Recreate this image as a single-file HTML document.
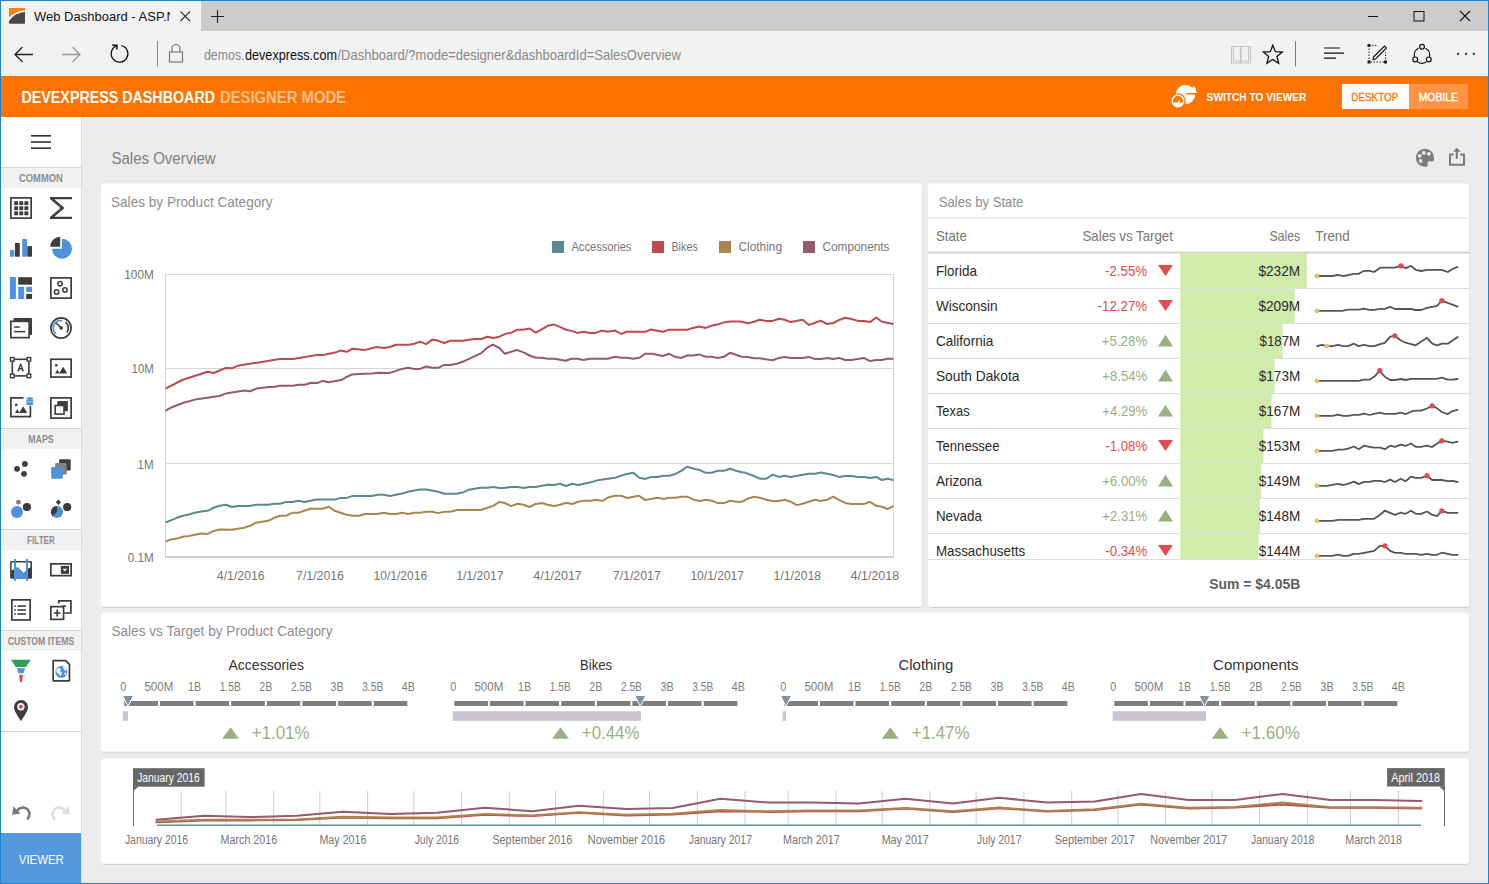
<!DOCTYPE html><html><head><meta charset="utf-8"><title>Web Dashboard</title>
<style>html,body{margin:0;padding:0;width:1489px;height:884px;overflow:hidden;background:#ececec}
svg{display:block;font-family:"Liberation Sans", sans-serif}</style></head><body>
<svg width="1489" height="884" viewBox="0 0 1489 884">
<defs>
<filter id="sh" x="-1%" y="-3%" width="102%" height="108%"><feDropShadow dx="0.3" dy="1" stdDeviation="0.7" flood-color="#000" flood-opacity="0.13"/></filter>
<clipPath id="tabclip"><rect x="30" y="1" width="140" height="30"/></clipPath>
<clipPath id="plotclip"><rect x="165.6" y="270" width="727.8" height="290"/></clipPath>
<clipPath id="gridclip"><rect x="928" y="253" width="541" height="306"/></clipPath>
</defs>
<rect x="0" y="0" width="1489" height="884" fill="#1883d7"/>
<rect x="1" y="1" width="1487" height="30" fill="#cccccc"/>
<rect x="1" y="1" width="200" height="30" fill="#f2f2f2"/>
<rect x="1" y="31" width="1487" height="45" fill="#f2f2f2"/>
<rect x="1" y="76" width="1487" height="41" fill="#ff7300"/>
<rect x="82" y="117" width="1406" height="766" fill="#ececec"/>
<rect x="1" y="117" width="80" height="766" fill="#ffffff"/>
<rect x="81" y="117" width="1" height="766" fill="#dcdcdc"/>
<path d="M9,17.6 C12.5,13.8 18,10.9 25,10.4 V12 C18,12.4 12,16.2 9,21.2 Z" fill="#ffffff"/>
<path d="M9,21.2 C12,16.2 18,12.4 25,12 V23 A0.8,0.8 0 0 1 24.2,23.8 H9.8 A0.8,0.8 0 0 1 9,23 Z" fill="#4a4a4a"/>
<path d="M9,7.9 H24.2 A0.8,0.8 0 0 1 25,8.7 V10.4 C18,10.9 12.5,13.8 9,17.6 Z" fill="#f67f1b"/>
<g clip-path="url(#tabclip)">
<text x="34.0" y="21.0" font-size="13" fill="#111111" textLength="132.5" lengthAdjust="spacingAndGlyphs">Web Dashboard - ASP.</text>
<text x="166.5" y="21.0" font-size="13" fill="#111111">NET</text>
</g>
<path d="M180.5,11.5 L190,21 M190,11.5 L180.5,21" fill="none" stroke="#333" stroke-width="1.1"/>
<path d="M217.5,10 V23 M211,16.5 H224" fill="none" stroke="#222" stroke-width="1.1"/>
<path d="M1368,16.5 H1378" fill="none" stroke="#111" stroke-width="1"/>
<rect x="1414" y="11.5" width="10" height="9.5" fill="none" stroke="#111" stroke-width="1"/>
<path d="M1460,11 L1470,21 M1470,11 L1460,21" fill="none" stroke="#111" stroke-width="1.1"/>
<path d="M33,54.5 H15 M22.5,47 L15,54.5 L22.5,62" fill="none" stroke="#222" stroke-width="1.3"/>
<path d="M62,54.5 H80 M72.5,47 L80,54.5 L72.5,62" fill="none" stroke="#999" stroke-width="1.3"/>
<path d="M121.4,45.6 A8.35,8.35 0 1 1 116.6,45.95" fill="none" stroke="#111" stroke-width="1.25"/>
<path d="M112.2,45.3 H116.9 V49.6" fill="none" stroke="#111" stroke-width="1.5" stroke-linejoin="miter"/>
<rect x="157" y="41" width="1" height="25.5" fill="#888888"/>
<rect x="169.5" y="52" width="13" height="10" fill="none" stroke="#777" stroke-width="1.2"/>
<path d="M172,52 V48.5 A4,4 0 0 1 180,48.5 V52" fill="none" stroke="#777" stroke-width="1.2"/>
<text x="204.0" y="59.6" font-size="14.5" fill="#8a8a8a" textLength="40.5" lengthAdjust="spacingAndGlyphs">demos.</text>
<text x="245.0" y="59.6" font-size="14.5" fill="#111111" textLength="92.0" lengthAdjust="spacingAndGlyphs">devexpress.com</text>
<text x="337.5" y="59.6" font-size="14.5" fill="#8a8a8a" textLength="343.5" lengthAdjust="spacingAndGlyphs">/Dashboard/?mode=designer&amp;dashboardId=SalesOverview</text>
<path d="M1231.5,46.5 H1240.5 V63 H1231.5 Z M1241,46.5 H1250.5 V63 H1241 Z" fill="none" stroke="#c4c4c4" stroke-width="1.1"/>
<path d="M1233.5,46.5 V61 H1240.5 M1248.5,46.5 V61 H1241" fill="none" stroke="#c4c4c4" stroke-width="1"/>
<path d="M1272.80,45.20 L1275.33,51.72 L1282.31,52.11 L1276.89,56.53 L1278.68,63.29 L1272.80,59.50 L1266.92,63.29 L1268.71,56.53 L1263.29,52.11 L1270.27,51.72 Z" fill="none" stroke="#111" stroke-width="1.3"/>
<rect x="1295" y="41.3" width="1" height="25.3" fill="#777777"/>
<path d="M1324,48 H1340 M1324,53.1 H1344 M1324,58.1 H1336" fill="none" stroke="#111" stroke-width="1.2"/>
<path d="M1369,45.5 V62 H1385.5 V52" fill="none" stroke="#222" stroke-width="1" stroke-dasharray="1.5,1.5"/>
<path d="M1369,45.5 H1377" fill="none" stroke="#222" stroke-width="1" stroke-dasharray="1.5,1.5"/>
<rect x="1367.5" y="44.0" width="3" height="3" fill="#222"/>
<rect x="1367.5" y="60.5" width="3" height="3" fill="#222"/>
<rect x="1384.0" y="60.5" width="3" height="3" fill="#222"/>
<path d="M1373.5,57 L1384.5,46 L1386.5,48 L1375.5,59 L1373,59.5 Z" fill="none" stroke="#111" stroke-width="1.1"/>
<path d="M1418.5,48.2 A7.5,7.5 0 0 0 1414.5,56.8 M1425.5,48.2 A7.5,7.5 0 0 1 1429.5,56.8 M1417.5,61.8 A7.5,7.5 0 0 0 1426.5,61.8" fill="none" stroke="#111" stroke-width="1.2"/>
<circle cx="1422" cy="46.7" r="2.4" fill="#f2f2f2" stroke="#111" stroke-width="1.2"/>
<circle cx="1415.2" cy="59.4" r="2.4" fill="#f2f2f2" stroke="#111" stroke-width="1.2"/>
<circle cx="1428.8" cy="59.4" r="2.4" fill="#f2f2f2" stroke="#111" stroke-width="1.2"/>
<circle cx="1458.1" cy="53.8" r="1.1" fill="#111"/>
<circle cx="1466.1" cy="53.8" r="1.1" fill="#111"/>
<circle cx="1473.8" cy="53.8" r="1.1" fill="#111"/>
<text x="21.5" y="103.0" font-size="15.6" fill="#ffffff" font-weight="bold" textLength="193.5" lengthAdjust="spacingAndGlyphs">DEVEXPRESS DASHBOARD</text>
<text x="220.0" y="103.0" font-size="15.6" fill="#ffc08c" font-weight="bold" textLength="126.0" lengthAdjust="spacingAndGlyphs">DESIGNER MODE</text>
<path d="M1185.5,94.5 L1195.1,94.5 A9.6,9.6 0 1 1 1192.29,87.71 Z" fill="#ffffff"/>
<path d="M1187.1,92.9 L1193.89,86.11 A9.6,9.6 0 0 1 1196.6999999999998,92.9 Z" fill="#ffffff"/>
<circle cx="1178" cy="101" r="7.8" fill="#ff7300"/>
<circle cx="1178" cy="101" r="6.5" fill="#ffffff"/>
<circle cx="1178" cy="101" r="5.1" fill="#ff7300"/>
<path d="M1173.1,102.6 L1182.9,102.6 A5.1,5.1 0 0 1 1173.1,102.6 Z" fill="#ffffff"/>
<path d="M1177.3,102.8 L1179.1,102.8 L1180.4,98.2 Z" fill="#ffffff"/>
<text x="1206.6" y="100.8" font-size="11.2" fill="#ffffff" font-weight="bold" textLength="99.8" lengthAdjust="spacingAndGlyphs">SWITCH TO VIEWER</text>
<rect x="1342" y="84" width="67" height="25" fill="#ffffff"/>
<text x="1351.3" y="100.6" font-size="10.8" fill="#ff7300" textLength="47.0" lengthAdjust="spacingAndGlyphs" stroke="#ff7300" stroke-width="0.35">DESKTOP</text>
<rect x="1409" y="84" width="59" height="25" fill="#ff9447"/>
<text x="1418.7" y="100.6" font-size="10.8" fill="#ffffff" textLength="39.2" lengthAdjust="spacingAndGlyphs" stroke="#ffffff" stroke-width="0.35">MOBILE</text>
<rect x="31" y="135.0" width="20" height="1.6" fill="#333333"/>
<rect x="31" y="141.2" width="20" height="1.6" fill="#333333"/>
<rect x="31" y="147.39999999999998" width="20" height="1.6" fill="#333333"/>
<rect x="1" y="167" width="80" height="1" fill="#d4d4d4"/>
<rect x="1" y="168" width="80" height="20" fill="#f2f2f2"/>
<text x="19.0" y="182.0" font-size="10" fill="#8c8c8c" font-weight="bold" textLength="43.8" lengthAdjust="spacingAndGlyphs">COMMON</text>
<rect x="1" y="428" width="80" height="1" fill="#d4d4d4"/>
<rect x="1" y="429" width="80" height="20" fill="#f2f2f2"/>
<text x="28.3" y="443.0" font-size="10" fill="#8c8c8c" font-weight="bold" textLength="25.4" lengthAdjust="spacingAndGlyphs">MAPS</text>
<rect x="1" y="529" width="80" height="1" fill="#d4d4d4"/>
<rect x="1" y="530" width="80" height="20" fill="#f2f2f2"/>
<text x="27.1" y="544.0" font-size="10" fill="#8c8c8c" font-weight="bold" textLength="27.8" lengthAdjust="spacingAndGlyphs">FILTER</text>
<rect x="1" y="630" width="80" height="1" fill="#d4d4d4"/>
<rect x="1" y="631" width="80" height="20" fill="#f2f2f2"/>
<text x="7.8" y="645.0" font-size="10" fill="#8c8c8c" font-weight="bold" textLength="66.4" lengthAdjust="spacingAndGlyphs">CUSTOM ITEMS</text>
<rect x="1" y="731" width="80" height="1" fill="#d4d4d4"/>
<g transform="translate(10,197)">
<rect x="0.85" y="0.85" width="20.3" height="20.3" fill="none" stroke="#3d3d3d" stroke-width="1.7"/>
<rect x="4.2" y="4.2" width="3.9" height="3.9" fill="#3d3d3d"/>
<rect x="4.2" y="9.3" width="3.9" height="3.9" fill="#3d3d3d"/>
<rect x="4.2" y="14.4" width="3.9" height="3.9" fill="#3d3d3d"/>
<rect x="9.3" y="4.2" width="3.9" height="3.9" fill="#3d3d3d"/>
<rect x="9.3" y="9.3" width="3.9" height="3.9" fill="#3d3d3d"/>
<rect x="9.3" y="14.4" width="3.9" height="3.9" fill="#3d3d3d"/>
<rect x="14.4" y="4.2" width="3.9" height="3.9" fill="#3d3d3d"/>
<rect x="14.4" y="9.3" width="3.9" height="3.9" fill="#3d3d3d"/>
<rect x="14.4" y="14.4" width="3.9" height="3.9" fill="#3d3d3d"/>
</g>
<g transform="translate(50,197)">
<path d="M0,0 H22 V2.2 H4.3 L14.6,11 L4.3,19.8 H22 V22 H0 V19.9 L10.6,11 L0,2.1 Z" fill="#3d3d3d"/>
</g>
<g transform="translate(10,239)">
<rect x="0" y="11" width="4.2" height="6.8" rx="0.8" fill="#4f92dc"/>
<rect x="4.9" y="4" width="4.9" height="13.8" rx="0.8" fill="#3d3d3d"/>
<rect x="12.2" y="0" width="4.8" height="17.8" rx="0.8" fill="#4f92dc"/>
<rect x="17.3" y="7" width="4.7" height="10.8" rx="0.8" fill="#3d3d3d"/>
</g>
<g transform="translate(50,237)">
<path d="M12,11.8 V1.8000000000000007 A10,10 0 1 1 2,11.8 Z" fill="#4f92dc"/>
<path d="M10.2,9.8 H0.2 A10,10 0 0 1 10.2,-0.2 Z" fill="#3d3d3d"/>
</g>
<g transform="translate(10,277)">
<rect x="0" y="0" width="5.9" height="22" fill="#4f92dc"/>
<rect x="8.2" y="0.2" width="13.8" height="7.5" fill="#3d3d3d"/>
<rect x="8.2" y="9.8" width="5.9" height="12.2" fill="#4f92dc"/>
<rect x="16.2" y="9.8" width="5.8" height="5.2" fill="#4f92dc"/>
<rect x="16.2" y="16.9" width="5.8" height="5.1" fill="#3d3d3d"/>
</g>
<g transform="translate(50,277)">
<rect x="0.85" y="0.85" width="20.3" height="20.3" fill="none" stroke="#3d3d3d" stroke-width="1.7"/>
<circle cx="10.1" cy="6.7" r="2.2" fill="none" stroke="#3d3d3d" stroke-width="1.5"/>
<circle cx="6.6" cy="15" r="2.2" fill="none" stroke="#3d3d3d" stroke-width="1.5"/>
<circle cx="15" cy="13" r="2.2" fill="none" stroke="#3d3d3d" stroke-width="1.5"/>
</g>
<g transform="translate(10,317)">
<rect x="3.4" y="1" width="18.6" height="17" rx="1" fill="#3d3d3d"/>
<rect x="0.85" y="4.35" width="18.3" height="16.3" fill="#fff" stroke="#3d3d3d" stroke-width="1.7"/>
<rect x="4.1" y="9.3" width="5.7" height="1.5" fill="#3d3d3d"/>
<rect x="4.1" y="13.9" width="11.1" height="1.5" fill="#3d3d3d"/>
</g>
<g transform="translate(50,317)">
<circle cx="11" cy="11" r="10.1" fill="none" stroke="#3d3d3d" stroke-width="1.7"/>
<path d="M6.2,16.8 A7.4,7.4 0 0 1 12.2,3.7" fill="none" stroke="#4f92dc" stroke-width="1.7"/>
<path d="M15.5,5.2 A7.4,7.4 0 0 1 16.8,15.6" fill="none" stroke="#3d3d3d" stroke-width="1.7"/>
<path d="M11.5,11.3 L5.8,5.7" fill="none" stroke="#3d3d3d" stroke-width="1.6"/>
<circle cx="11.2" cy="11" r="1.8" fill="#3d3d3d"/>
</g>
<g transform="translate(10,357)">
<rect x="2.3" y="2.3" width="16.6" height="16.6" fill="none" stroke="#3d3d3d" stroke-width="1.6"/>
<rect x="0.4999999999999998" y="0.4999999999999998" width="3.6" height="3.6" fill="#fff" stroke="#3d3d3d" stroke-width="1.4"/>
<rect x="17.099999999999998" y="0.4999999999999998" width="3.6" height="3.6" fill="#fff" stroke="#3d3d3d" stroke-width="1.4"/>
<rect x="0.4999999999999998" y="17.099999999999998" width="3.6" height="3.6" fill="#fff" stroke="#3d3d3d" stroke-width="1.4"/>
<rect x="17.099999999999998" y="17.099999999999998" width="3.6" height="3.6" fill="#fff" stroke="#3d3d3d" stroke-width="1.4"/>
<path d="M7.3,14.2 L10.1,6.6 H11.2 L14,14.2 H12.3 L11.7,12.4 H9.6 L9,14.2 Z M10,11.1 H11.3 L10.65,9.1 Z" fill="#3d3d3d"/>
</g>
<g transform="translate(50,358.4)">
<rect x="0.85" y="0.85" width="20.3" height="17.8" fill="none" stroke="#3d3d3d" stroke-width="1.7"/>
<circle cx="6.2" cy="6.8" r="1.3" fill="#3d3d3d"/>
<path d="M5,15 L7.4,11 L9.5,15 Z M9,15 L13.2,8.3 L17.2,15 Z" fill="#3d3d3d"/>
</g>
<g transform="translate(10,397)">
<path d="M13.5,0.85 H0.85 V19.7 H20.4 V9" fill="none" stroke="#3d3d3d" stroke-width="1.7"/>
<circle cx="6.2" cy="7.9" r="1.3" fill="#3d3d3d"/>
<path d="M5,16 L7.4,12 L9.5,16 Z M9,16 L13.2,9.3 L17.2,16 Z" fill="#3d3d3d"/>
<ellipse cx="19.8" cy="1.6" rx="3.4" ry="1.4" fill="#4f92dc"/>
<rect x="16.4" y="2.8" width="6.8" height="1.8" fill="#4f92dc"/>
<rect x="16.4" y="5.2" width="6.8" height="1.8" fill="#4f92dc"/>
<ellipse cx="19.8" cy="7" rx="3.4" ry="1.3" fill="#4f92dc"/>
</g>
<g transform="translate(50,397)">
<rect x="0.85" y="0.85" width="20.3" height="20.3" fill="none" stroke="#3d3d3d" stroke-width="1.7"/>
<rect x="7.3" y="4.1" width="10.6" height="10.2" rx="0.8" fill="#3d3d3d"/>
<rect x="5.2" y="8.5" width="8.8" height="8.6" fill="#fff" stroke="#3d3d3d" stroke-width="1.6"/>
</g>
<circle cx="17" cy="468.8" r="2.9" fill="#3d3d3d"/>
<circle cx="24.9" cy="463.9" r="2.9" fill="#3d3d3d"/>
<circle cx="24" cy="473.8" r="2.9" fill="#3d3d3d"/>
<rect x="59.1" y="459.2" width="11.6" height="11.4" rx="1.2" fill="#3d3d3d"/>
<rect x="55.1" y="462.9" width="11.6" height="11.6" rx="1.2" fill="#808080"/>
<rect x="51.2" y="467.1" width="11.6" height="11.6" rx="1.2" fill="#4f92dc"/>
<circle cx="18.4" cy="502.2" r="2.4" fill="#808080"/>
<circle cx="26.9" cy="507" r="4.1" fill="#3d3d3d"/>
<circle cx="17" cy="512" r="6" fill="#4f92dc"/>
<path d="M58.4,499.6 L61,502.3 L58.4,505 L55.8,502.3 Z" fill="#3d3d3d"/>
<circle cx="67.2" cy="507" r="4.1" fill="#3d3d3d"/>
<circle cx="57" cy="512" r="6" fill="#4f92dc"/>
<path d="M57,512 L57,506 A6,6 0 0 0 52.7,516.2 Z" fill="#3d3d3d"/>
<g transform="translate(10,559)">
<rect x="0.1" y="2.1" width="21.9" height="17.7" rx="1.3" fill="#3d3d3d"/>
<path d="M1.6,3.6 H20.4 V8.4 L18.06,9.6 L16,11.95 L13.5,14 L7.54,8.05 L5.84,9.2 L4.1,10.3 L1.6,11.6 Z" fill="#ffffff"/>
<path d="M4,10.3 L5.84,9.2 L7.54,8.05 L13.5,14 L16,11.95 L18,9.65 V19.8 H4 Z" fill="#4f92dc"/>
<rect x="4" y="-0.1" width="2" height="21.9" fill="#4f92dc"/>
<rect x="16" y="-0.1" width="2" height="21.9" fill="#4f92dc"/>
</g>
<g transform="translate(50,563)">
<rect x="0.85" y="0.85" width="20.3" height="11.8" fill="none" stroke="#3d3d3d" stroke-width="1.7"/>
<rect x="10.8" y="2.9" width="8.2" height="8" fill="#3d3d3d"/>
<path d="M12.6,5.7 H17.2 L14.9,8.4 Z" fill="#fff"/>
</g>
<g transform="translate(10,599)">
<rect x="1.85" y="0.85" width="18.3" height="20.1" fill="none" stroke="#3d3d3d" stroke-width="1.7"/>
<rect x="4.2" y="6.3" width="1.6" height="1.6" fill="#3d3d3d"/>
<rect x="7.4" y="6.3" width="8.5" height="1.6" fill="#3d3d3d"/>
<rect x="4.2" y="10.2" width="1.6" height="1.6" fill="#3d3d3d"/>
<rect x="7.4" y="10.2" width="8.5" height="1.6" fill="#3d3d3d"/>
<rect x="4.2" y="14.2" width="1.6" height="1.6" fill="#3d3d3d"/>
<rect x="7.4" y="14.2" width="8.5" height="1.6" fill="#3d3d3d"/>
</g>
<g transform="translate(50,599)">
<path d="M8.7,4.5 V1.95 H20.9 V14 H14" fill="none" stroke="#3d3d3d" stroke-width="1.7"/>
<rect x="12.5" y="6.2" width="3.5" height="1.5" fill="#3d3d3d"/>
<rect x="0.85" y="7.65" width="12.7" height="12.7" fill="#fff" stroke="#3d3d3d" stroke-width="1.7"/>
<path d="M7.2,10.6 V17.4 M3.8,14 H10.6" fill="none" stroke="#3d3d3d" stroke-width="1.7"/>
</g>
<path d="M11,659.8 H30.8 L25.9,666.9 H15.8 Z" fill="#2f9e5a"/>
<path d="M16.7,668.3 H25.2 L23.5,673.3 H18.4 Z" fill="#4f92dc"/>
<path d="M19.1,674.7 H22.9 L22.1,682 H19.9 Z" fill="#e0464e"/>
<g transform="translate(52.3,659.8)">
<path d="M0.85,0.85 H13.5 L17.15,4.5 V21 H0.85 Z" fill="none" stroke="#3d3d3d" stroke-width="1.7" stroke-linejoin="round"/>
<circle cx="9" cy="12.3" r="6" fill="#4f92dc"/>
<path d="M6,8 L8.5,9.2 L7.8,11.5 L9.8,13 L8.2,16.5 L7,14.5 L4.6,12.6 L3.8,10.2 Z M10.2,7 L12.6,7.6 L14.2,10 L12.8,11.2 Z M11.8,13.2 L14,12.6 L13,16 Z" fill="#fff"/>
</g>
<path d="M21,700 A7,7 0 0 1 28,707 C28,711.5 24,716 21,721.3 C18,716 14,711.5 14,707 A7,7 0 0 1 21,700 Z" fill="#3d3d3d"/>
<circle cx="20.9" cy="706.8" r="3.7" fill="#ffffff"/>
<circle cx="20.9" cy="706.8" r="2" fill="#e0464e"/>
<path d="M16.8,810.8 C19.5,807.3 24.8,806.2 27.8,809.6 C30.3,812.6 29.6,816.6 27.3,819.4" fill="none" stroke="#7a7a7a" stroke-width="2.6"/>
<path d="M13.3,806.25 L12.1,814.8 L20.6,813.45 Z" fill="#7a7a7a"/>
<g transform="translate(82,0) scale(-1,1)">
<path d="M16.8,810.8 C19.5,807.3 24.8,806.2 27.8,809.6 C30.3,812.6 29.6,816.6 27.3,819.4" fill="none" stroke="#dedede" stroke-width="2.6"/>
<path d="M13.3,806.25 L12.1,814.8 L20.6,813.45 Z" fill="#dedede"/>
</g>
<rect x="1" y="833" width="80" height="50" fill="#5599dd"/>
<text x="18.8" y="863.8" font-size="12.5" fill="#ffffff" textLength="45.0" lengthAdjust="spacingAndGlyphs">VIEWER</text>
<text x="111.5" y="164.0" font-size="16" fill="#808080" textLength="104.2" lengthAdjust="spacingAndGlyphs">Sales Overview</text>
<g transform="translate(1416,148.7)">
<path d="M9,0 A9,9 0 0 0 0,9.5 A8.6,8.6 0 0 0 8.6,18 C10.6,18 12.2,17.5 11.7,16 C11.2,14.6 11.6,12.6 13.6,12.6 C15.2,12.6 16.6,13 17.5,12 C18,11.2 18,10.2 18,9 A9,9 0 0 0 9,0 Z" fill="#7b7b7b"/>
<circle cx="3.7" cy="7.1" r="1.9" fill="#ececec"/>
<circle cx="7.8" cy="4.2" r="1.9" fill="#ececec"/>
<circle cx="12.9" cy="5.1" r="1.9" fill="#ececec"/>
<circle cx="4.7" cy="12.2" r="1.9" fill="#ececec"/>
</g>
<g transform="translate(1449,147.8)">
<path d="M0,5.6 H4.7 V7.6 H2 V16 H14 V7.6 H11.2 V5.6 H16 V18 H0 Z" fill="#7b7b7b"/>
<rect x="6.8" y="3.3" width="2" height="7.8" fill="#7b7b7b"/>
<path d="M4.1,3.9 L7.8,0 L11.9,3.9 Z" fill="#7b7b7b"/>
</g>
<rect x="101" y="183.6" width="821" height="423.4" rx="3" fill="#ffffff" filter="url(#sh)"/>
<rect x="928" y="183.6" width="541" height="423.4" rx="3" fill="#ffffff" filter="url(#sh)"/>
<rect x="101" y="612.6" width="1368" height="139" rx="3" fill="#ffffff" filter="url(#sh)"/>
<rect x="101" y="758.4" width="1368" height="105.4" rx="3" fill="#ffffff" filter="url(#sh)"/>
<text x="111.0" y="206.9" font-size="14.8" fill="#8e8e8e" textLength="161.6" lengthAdjust="spacingAndGlyphs">Sales by Product Category</text>
<rect x="552" y="241" width="12" height="12" fill="#5a8991"/>
<text x="571.4" y="251.0" font-size="13" fill="#767676" textLength="60.0" lengthAdjust="spacingAndGlyphs">Accessories</text>
<rect x="652" y="241" width="12" height="12" fill="#bd4a51"/>
<text x="671.4" y="251.0" font-size="13" fill="#767676" textLength="26.5" lengthAdjust="spacingAndGlyphs">Bikes</text>
<rect x="719" y="241" width="12" height="12" fill="#ab8550"/>
<text x="738.4" y="251.0" font-size="13" fill="#767676" textLength="43.7" lengthAdjust="spacingAndGlyphs">Clothing</text>
<rect x="803" y="241" width="12" height="12" fill="#955a6c"/>
<text x="822.5" y="251.0" font-size="13" fill="#767676" textLength="67.0" lengthAdjust="spacingAndGlyphs">Components</text>
<rect x="165" y="274" width="728.5" height="1" fill="#d6d6d6"/>
<rect x="165" y="368" width="728.5" height="1" fill="#d6d6d6"/>
<rect x="165" y="463" width="728.5" height="1" fill="#d6d6d6"/>
<rect x="165" y="274" width="1" height="283" fill="#d6d6d6"/>
<rect x="893" y="274" width="1" height="283" fill="#d6d6d6"/>
<rect x="165" y="556" width="729" height="2" fill="#cdcdcd"/>
<text x="124.3" y="279.3" font-size="13" fill="#767676" textLength="29.5" lengthAdjust="spacingAndGlyphs">100M</text>
<text x="131.6" y="373.4" font-size="13" fill="#767676" textLength="22.2" lengthAdjust="spacingAndGlyphs">10M</text>
<text x="137.6" y="468.5" font-size="13" fill="#767676" textLength="16.1" lengthAdjust="spacingAndGlyphs">1M</text>
<text x="127.7" y="562.0" font-size="13" fill="#767676" textLength="26.0" lengthAdjust="spacingAndGlyphs">0.1M</text>
<text x="216.8" y="580.4" font-size="13" fill="#767676" textLength="47.9" lengthAdjust="spacingAndGlyphs">4/1/2016</text>
<text x="296.1" y="580.4" font-size="13" fill="#767676" textLength="47.8" lengthAdjust="spacingAndGlyphs">7/1/2016</text>
<text x="373.5" y="580.4" font-size="13" fill="#767676" textLength="53.7" lengthAdjust="spacingAndGlyphs">10/1/2016</text>
<text x="456.2" y="580.4" font-size="13" fill="#767676" textLength="47.4" lengthAdjust="spacingAndGlyphs">1/1/2017</text>
<text x="533.3" y="580.4" font-size="13" fill="#767676" textLength="48.5" lengthAdjust="spacingAndGlyphs">4/1/2017</text>
<text x="612.8" y="580.4" font-size="13" fill="#767676" textLength="48.0" lengthAdjust="spacingAndGlyphs">7/1/2017</text>
<text x="690.4" y="580.4" font-size="13" fill="#767676" textLength="53.6" lengthAdjust="spacingAndGlyphs">10/1/2017</text>
<text x="773.6" y="580.4" font-size="13" fill="#767676" textLength="47.4" lengthAdjust="spacingAndGlyphs">1/1/2018</text>
<text x="850.6" y="580.4" font-size="13" fill="#767676" textLength="48.6" lengthAdjust="spacingAndGlyphs">4/1/2018</text>
<g clip-path="url(#plotclip)">
<polyline points="165.5,388.6 182.2,380.0 207.5,371.8 213.8,373.0 225.7,368.0 232.0,368.3 237.6,365.8 279.6,359.0 293.0,359.1 316.8,355.0 323.0,355.0 335.0,352.6 340.5,350.6 346.9,351.8 352.4,348.7 355.0,349.0 364.4,350.1 376.5,347.0 383.9,348.0 389.9,347.0 396.0,344.7 408.7,344.7 414.1,343.7 420.1,341.6 426.2,344.1 432.2,339.6 437.6,340.6 444.3,343.0 450.4,340.7 462.5,340.7 474.5,339.0 481.3,339.0 487.3,336.7 493.3,338.0 499.4,336.7 505.4,333.8 510.8,332.9 516.9,329.8 522.9,329.8 529.6,328.5 535.7,332.6 541.7,329.3 547.7,325.8 554.0,324.6 559.4,326.6 565.4,329.5 571.5,330.9 577.5,332.9 583.6,331.8 589.6,332.9 595.7,332.9 601.7,330.6 607.8,331.8 615.1,330.6 621.2,334.0 626.6,331.8 645.4,331.8 650.7,329.5 662.8,331.8 668.9,329.8 687.0,329.8 693.0,327.9 699.1,326.6 705.8,327.9 711.2,325.8 717.2,324.6 723.3,322.6 730.0,321.5 740.7,321.5 747.8,323.2 754.0,321.8 759.7,319.8 766.5,320.9 772.7,320.9 778.9,318.7 784.6,319.8 790.8,322.1 802.7,319.8 808.9,324.9 820.8,320.7 827.0,324.0 833.2,323.0 838.9,320.1 845.1,317.8 851.3,319.0 858.1,320.9 863.8,320.9 870.0,322.1 876.2,317.5 881.9,321.8 893.5,324.0" fill="none" stroke="#bd4a51" stroke-width="2" stroke-linejoin="round" stroke-linecap="round"/>
<polyline points="165.4,410.8 170.7,407.7 182.8,403.0 194.9,399.6 219.1,396.0 225.8,393.6 235.2,392.0 244.6,390.6 250.0,391.2 256.7,388.5 268.8,386.9 274.2,386.9 279.5,385.8 293.0,385.8 298.3,384.8 305.0,384.8 311.1,382.8 317.2,383.1 322.5,380.8 328.6,382.2 341.3,380.1 346.7,376.8 352.1,374.5 359.0,373.9 371.8,373.6 378.5,372.8 389.9,372.9 402.0,368.9 408.1,367.8 414.1,368.9 420.1,368.9 426.2,366.5 432.2,367.8 438.3,367.8 444.3,364.9 450.4,364.9 457.1,363.8 462.5,361.8 481.3,353.1 487.3,347.7 492.7,344.7 499.4,348.0 504.8,353.7 516.9,350.0 522.9,352.1 529.6,355.5 535.7,357.8 541.7,357.8 547.7,358.7 554.7,358.7 565.4,360.8 571.5,358.7 577.5,358.7 583.6,360.0 589.6,358.7 607.8,358.7 615.1,356.7 621.2,357.8 627.2,357.8 633.3,358.8 639.3,357.8 645.4,353.7 652.1,353.7 662.8,356.0 668.9,353.7 674.9,356.8 681.0,358.0 687.0,355.5 693.0,355.5 699.1,354.4 705.8,356.8 711.9,356.8 717.9,358.0 723.9,356.8 730.0,352.8 736.0,354.8 741.4,356.8 747.8,356.9 754.0,358.3 759.7,358.3 772.7,360.2 778.9,357.9 784.6,356.9 790.8,358.0 802.7,358.0 808.9,356.9 815.1,359.1 820.8,359.1 827.0,357.9 833.2,359.1 838.9,357.9 845.1,360.0 851.3,360.0 863.8,357.9 870.0,361.1 876.2,360.0 881.9,360.0 887.5,358.8 893.5,358.8" fill="none" stroke="#955a6c" stroke-width="2" stroke-linejoin="round" stroke-linecap="round"/>
<polyline points="165.4,522.5 170.7,520.4 176.8,517.8 182.8,515.7 188.9,514.4 194.9,512.7 201.0,511.4 207.7,510.8 213.7,507.7 219.8,505.7 225.8,504.7 231.9,507.0 237.9,505.9 250.0,505.9 256.0,504.7 268.1,504.7 274.2,503.7 280.2,503.7 286.3,501.9 292.3,501.9 298.3,500.7 304.4,502.0 310.4,500.7 316.5,499.6 334.6,499.6 340.7,497.9 346.7,497.9 352.7,495.9 360.0,495.9 371.8,495.9 377.8,494.7 383.9,494.7 389.9,496.0 402.0,493.6 408.1,491.8 420.1,489.6 426.2,489.6 438.3,491.8 444.3,493.8 456.4,493.8 462.5,492.6 468.5,489.8 480.6,487.8 487.3,487.8 493.3,486.9 499.4,487.9 504.1,487.9 511.5,486.9 517.5,486.9 523.6,487.9 529.6,486.9 535.7,486.9 547.7,484.8 554.0,484.9 560.1,483.8 566.1,486.0 572.2,483.8 578.2,484.9 589.6,482.6 596.3,480.6 602.4,479.6 615.1,477.8 626.6,473.9 633.3,472.8 639.3,477.8 645.4,478.9 651.4,476.9 657.5,476.9 663.5,475.8 669.5,475.8 675.6,473.9 681.6,470.6 687.0,466.8 693.7,468.8 699.8,470.1 705.8,472.8 711.9,472.8 717.9,470.8 723.9,470.8 730.0,468.8 736.0,470.8 742.1,472.2 745.0,472.6 754.0,476.0 760.3,478.8 765.9,478.8 772.7,474.7 778.9,476.9 784.6,475.8 790.8,476.9 802.7,474.7 808.9,473.8 815.1,473.8 820.8,472.6 833.2,474.9 838.9,476.9 845.1,476.0 851.3,476.0 858.1,476.9 863.8,476.9 870.0,478.1 876.2,476.9 881.9,480.0 887.5,478.8 893.5,480.0" fill="none" stroke="#5a8991" stroke-width="2" stroke-linejoin="round" stroke-linecap="round"/>
<polyline points="165.4,541.7 170.7,539.5 176.8,538.6 182.8,536.8 188.9,535.9 201.0,533.6 207.7,533.9 213.7,530.9 219.8,529.6 231.9,529.8 243.9,527.8 250.0,525.8 256.0,522.7 268.1,520.8 274.2,517.8 280.2,515.7 286.3,515.7 292.3,512.8 298.3,512.8 310.4,508.8 322.5,508.8 328.6,506.7 334.6,510.8 346.7,514.8 352.7,515.7 359.0,515.7 365.1,514.0 377.2,514.0 383.9,512.8 389.9,514.0 396.0,514.0 402.0,512.8 408.1,514.0 414.1,512.8 420.1,512.8 426.2,511.7 432.2,511.7 438.3,513.1 444.3,511.7 450.4,511.7 457.1,510.0 480.6,510.0 493.3,505.9 499.4,501.9 504.8,503.0 510.8,506.1 517.5,503.7 523.6,504.7 529.6,507.0 535.7,503.9 541.7,503.0 547.7,504.7 554.0,506.1 560.1,504.8 566.1,502.8 572.2,504.0 578.2,501.7 584.3,500.8 590.3,500.8 596.3,499.7 602.4,501.0 608.4,497.3 615.1,495.7 621.2,495.7 627.2,498.0 638.7,495.7 645.4,500.1 657.5,497.7 663.5,499.0 669.5,497.7 675.6,497.7 681.6,496.7 687.0,496.7 693.7,499.7 699.8,501.0 705.8,499.7 711.9,500.8 717.9,503.1 723.9,503.1 730.0,500.8 736.0,501.7 742.1,501.7 747.8,498.6 754.0,496.7 759.7,497.7 766.5,499.8 772.7,500.9 778.9,500.9 784.6,499.8 790.8,501.8 797.0,505.1 802.7,503.7 808.9,501.8 815.1,499.8 820.8,500.9 827.0,499.8 833.2,496.7 838.9,499.8 845.1,502.9 851.3,504.1 863.8,504.1 870.0,501.8 876.2,505.8 881.9,506.8 887.5,509.1 893.5,506.0" fill="none" stroke="#ab8550" stroke-width="2" stroke-linejoin="round" stroke-linecap="round"/>
</g>
<text x="938.7" y="206.9" font-size="14.8" fill="#8e8e8e" textLength="84.7" lengthAdjust="spacingAndGlyphs">Sales by State</text>
<rect x="928" y="217.5" width="541" height="1" fill="#dddddd"/>
<text x="935.9" y="241.0" font-size="14.5" fill="#767676" textLength="30.9" lengthAdjust="spacingAndGlyphs">State</text>
<text x="1082.5" y="241.0" font-size="14.5" fill="#767676" textLength="90.4" lengthAdjust="spacingAndGlyphs">Sales vs Target</text>
<text x="1269.6" y="241.0" font-size="14.5" fill="#767676" textLength="30.4" lengthAdjust="spacingAndGlyphs">Sales</text>
<text x="1315.3" y="241.0" font-size="14.5" fill="#767676" textLength="34.4" lengthAdjust="spacingAndGlyphs">Trend</text>
<rect x="928" y="251.5" width="541" height="2" fill="#d3d3d3"/>
<g clip-path="url(#gridclip)">
<rect x="1180.2" y="253" width="126.59999999999991" height="35" fill="#d0ecab"/>
<text x="935.9" y="275.7" font-size="14.5" fill="#2a2a2a" textLength="41.1" lengthAdjust="spacingAndGlyphs">Florida</text>
<text x="1104.9" y="275.7" font-size="14.5" fill="#e34c53" textLength="42.3" lengthAdjust="spacingAndGlyphs">-2.55%</text>
<path d="M1158,265 L1173,265 L1165.5,276 Z" fill="#e34c53"/>
<text x="1258.4" y="275.7" font-size="14.5" fill="#2a2a2a" textLength="41.8" lengthAdjust="spacingAndGlyphs">$232M</text>
<polyline points="1316.9,276.0 1332.6,276.0 1337.9,274.8 1343.3,276.1 1353.9,273.8 1358.7,273.8 1364.0,270.8 1369.4,270.8 1374.1,272.0 1380.1,267.7 1394.9,267.7 1400.9,265.9 1405.6,268.1 1411.0,265.9 1415.7,269.8 1421.1,271.0 1427.0,269.8 1441.8,269.8 1447.8,272.0 1452.5,269.0 1457.6,266.9" fill="none" stroke="#555555" stroke-width="1.8" stroke-linejoin="round" stroke-linecap="round"/>
<circle cx="1316.9" cy="276.0" r="2.4" fill="#e8c066"/>
<circle cx="1400.9" cy="265.9" r="2.6" fill="#e5474f"/>
<rect x="1180.2" y="288" width="114.59999999999991" height="35" fill="#d0ecab"/>
<rect x="928" y="288" width="541" height="1" fill="#dcdcdc"/>
<text x="935.9" y="310.7" font-size="14.5" fill="#2a2a2a" textLength="61.7" lengthAdjust="spacingAndGlyphs">Wisconsin</text>
<text x="1097.6" y="310.7" font-size="14.5" fill="#e34c53" textLength="49.6" lengthAdjust="spacingAndGlyphs">-12.27%</text>
<path d="M1158,300 L1173,300 L1165.5,311 Z" fill="#e34c53"/>
<text x="1258.4" y="310.7" font-size="14.5" fill="#2a2a2a" textLength="41.8" lengthAdjust="spacingAndGlyphs">$209M</text>
<polyline points="1316.9,310.8 1342.1,310.8 1348.0,309.6 1358.7,309.6 1364.0,308.7 1369.4,309.9 1374.1,309.9 1380.1,308.8 1384.8,308.8 1390.2,306.9 1394.9,309.0 1411.0,309.0 1415.7,310.0 1421.1,310.0 1427.0,307.9 1437.1,305.8 1441.8,300.7 1457.6,306.7" fill="none" stroke="#555555" stroke-width="1.8" stroke-linejoin="round" stroke-linecap="round"/>
<circle cx="1316.9" cy="310.8" r="2.4" fill="#e8c066"/>
<circle cx="1441.8" cy="300.7" r="2.6" fill="#e5474f"/>
<rect x="1180.2" y="323" width="102.5" height="35" fill="#d0ecab"/>
<rect x="928" y="323" width="541" height="1" fill="#dcdcdc"/>
<text x="935.9" y="345.7" font-size="14.5" fill="#2a2a2a" textLength="57.4" lengthAdjust="spacingAndGlyphs">California</text>
<text x="1101.8" y="345.7" font-size="14.5" fill="#97b182" textLength="45.4" lengthAdjust="spacingAndGlyphs">+5.28%</text>
<path d="M1158,346.5 L1165.5,334.7 L1173,346.5 Z" fill="#97b182"/>
<text x="1259.5" y="345.7" font-size="14.5" fill="#2a2a2a" textLength="40.7" lengthAdjust="spacingAndGlyphs">$187M</text>
<polyline points="1317.1,346.1 1321.9,344.9 1326.9,346.1 1332.6,346.1 1337.9,344.9 1343.3,346.1 1348.0,346.1 1353.9,343.7 1358.7,346.1 1364.0,344.9 1369.4,346.1 1374.1,346.1 1380.1,344.1 1384.8,342.9 1390.2,336.7 1394.9,335.8 1400.9,340.5 1405.6,342.7 1415.7,345.3 1427.0,337.8 1432.3,343.7 1437.1,345.3 1441.8,343.7 1447.8,343.7 1452.5,340.5 1457.6,337.0" fill="none" stroke="#555555" stroke-width="1.8" stroke-linejoin="round" stroke-linecap="round"/>
<circle cx="1326.9" cy="346.1" r="2.4" fill="#e8c066"/>
<circle cx="1394.9" cy="335.8" r="2.6" fill="#e5474f"/>
<rect x="1180.2" y="358" width="94.39999999999986" height="35" fill="#d0ecab"/>
<rect x="928" y="358" width="541" height="1" fill="#dcdcdc"/>
<text x="935.9" y="380.7" font-size="14.5" fill="#2a2a2a" textLength="83.5" lengthAdjust="spacingAndGlyphs">South Dakota</text>
<text x="1102.3" y="380.7" font-size="14.5" fill="#97b182" textLength="44.9" lengthAdjust="spacingAndGlyphs">+8.54%</text>
<path d="M1158,381.5 L1165.5,369.7 L1173,381.5 Z" fill="#97b182"/>
<text x="1258.8" y="380.7" font-size="14.5" fill="#2a2a2a" textLength="41.4" lengthAdjust="spacingAndGlyphs">$173M</text>
<polyline points="1316.9,380.8 1358.7,380.8 1364.0,379.7 1369.4,379.7 1374.1,376.8 1379.8,370.7 1384.8,376.8 1390.2,380.0 1394.9,380.0 1400.9,379.0 1405.6,380.0 1411.0,378.8 1436.5,378.8 1441.8,377.6 1447.8,379.7 1452.5,379.7 1457.6,379.0" fill="none" stroke="#555555" stroke-width="1.8" stroke-linejoin="round" stroke-linecap="round"/>
<circle cx="1316.9" cy="380.8" r="2.4" fill="#e8c066"/>
<circle cx="1379.8" cy="370.7" r="2.6" fill="#e5474f"/>
<rect x="1180.2" y="393" width="91.29999999999995" height="35" fill="#d0ecab"/>
<rect x="928" y="393" width="541" height="1" fill="#dcdcdc"/>
<text x="935.9" y="415.7" font-size="14.5" fill="#2a2a2a" textLength="33.8" lengthAdjust="spacingAndGlyphs">Texas</text>
<text x="1102.3" y="415.7" font-size="14.5" fill="#97b182" textLength="44.9" lengthAdjust="spacingAndGlyphs">+4.29%</text>
<path d="M1158,416.5 L1165.5,404.7 L1173,416.5 Z" fill="#97b182"/>
<text x="1258.8" y="415.7" font-size="14.5" fill="#2a2a2a" textLength="41.4" lengthAdjust="spacingAndGlyphs">$167M</text>
<polyline points="1316.9,415.8 1332.6,415.8 1337.9,414.7 1343.3,415.8 1348.0,415.8 1353.9,414.8 1358.7,414.8 1364.0,413.6 1369.4,415.0 1374.1,413.8 1380.1,412.6 1384.8,413.8 1394.9,413.8 1400.9,412.6 1405.6,414.1 1411.0,411.7 1415.7,410.6 1421.1,410.6 1427.0,408.5 1432.1,405.9 1436.5,407.9 1441.8,412.0 1447.8,414.1 1452.5,411.1 1457.6,409.9" fill="none" stroke="#555555" stroke-width="1.8" stroke-linejoin="round" stroke-linecap="round"/>
<circle cx="1316.9" cy="415.8" r="2.4" fill="#e8c066"/>
<circle cx="1432.1" cy="405.9" r="2.6" fill="#e5474f"/>
<rect x="1180.2" y="428" width="83.29999999999995" height="35" fill="#d0ecab"/>
<rect x="928" y="428" width="541" height="1" fill="#dcdcdc"/>
<text x="935.9" y="450.7" font-size="14.5" fill="#2a2a2a" textLength="63.6" lengthAdjust="spacingAndGlyphs">Tennessee</text>
<text x="1105.3" y="450.7" font-size="14.5" fill="#e34c53" textLength="41.9" lengthAdjust="spacingAndGlyphs">-1.08%</text>
<path d="M1158,440 L1173,440 L1165.5,451 Z" fill="#e34c53"/>
<text x="1258.8" y="450.7" font-size="14.5" fill="#2a2a2a" textLength="41.4" lengthAdjust="spacingAndGlyphs">$153M</text>
<polyline points="1316.9,450.9 1332.6,450.9 1337.9,449.7 1343.3,449.7 1348.0,448.6 1353.9,446.5 1358.7,449.2 1364.0,445.7 1369.4,446.8 1374.1,447.7 1380.1,447.7 1384.8,449.2 1390.2,445.7 1394.9,446.8 1400.9,444.7 1405.6,445.9 1411.0,443.5 1415.7,446.8 1421.1,446.8 1427.0,445.7 1432.1,447.1 1437.1,443.5 1441.8,440.8 1447.8,441.7 1452.5,442.9 1457.6,441.7" fill="none" stroke="#555555" stroke-width="1.8" stroke-linejoin="round" stroke-linecap="round"/>
<circle cx="1316.9" cy="450.9" r="2.4" fill="#e8c066"/>
<circle cx="1441.8" cy="440.8" r="2.6" fill="#e5474f"/>
<rect x="1180.2" y="463" width="81.0" height="35" fill="#d0ecab"/>
<rect x="928" y="463" width="541" height="1" fill="#dcdcdc"/>
<text x="935.9" y="485.7" font-size="14.5" fill="#2a2a2a" textLength="46.0" lengthAdjust="spacingAndGlyphs">Arizona</text>
<text x="1102.3" y="485.7" font-size="14.5" fill="#97b182" textLength="44.9" lengthAdjust="spacingAndGlyphs">+6.00%</text>
<path d="M1158,486.5 L1165.5,474.7 L1173,486.5 Z" fill="#97b182"/>
<text x="1258.8" y="485.7" font-size="14.5" fill="#2a2a2a" textLength="41.4" lengthAdjust="spacingAndGlyphs">$149M</text>
<polyline points="1316.9,485.8 1326.6,485.8 1337.9,483.8 1343.3,485.0 1348.0,483.8 1353.9,481.6 1358.7,484.1 1364.0,481.8 1369.4,481.8 1374.1,480.8 1380.1,480.8 1384.8,482.0 1390.2,479.6 1394.9,482.0 1400.9,478.7 1405.6,481.2 1411.0,476.7 1415.7,477.8 1421.1,477.8 1427.0,475.7 1432.1,480.0 1441.8,480.0 1447.8,481.1 1452.5,480.8 1457.6,482.0" fill="none" stroke="#555555" stroke-width="1.8" stroke-linejoin="round" stroke-linecap="round"/>
<circle cx="1316.9" cy="485.8" r="2.4" fill="#e8c066"/>
<circle cx="1427.0" cy="475.7" r="2.6" fill="#e5474f"/>
<rect x="1180.2" y="498" width="79.79999999999995" height="35" fill="#d0ecab"/>
<rect x="928" y="498" width="541" height="1" fill="#dcdcdc"/>
<text x="935.9" y="520.7" font-size="14.5" fill="#2a2a2a" textLength="46.0" lengthAdjust="spacingAndGlyphs">Nevada</text>
<text x="1102.3" y="520.7" font-size="14.5" fill="#97b182" textLength="44.9" lengthAdjust="spacingAndGlyphs">+2.31%</text>
<path d="M1158,521.5 L1165.5,509.7 L1173,521.5 Z" fill="#97b182"/>
<text x="1258.8" y="520.7" font-size="14.5" fill="#2a2a2a" textLength="41.4" lengthAdjust="spacingAndGlyphs">$148M</text>
<polyline points="1316.9,520.8 1332.6,520.8 1337.9,519.8 1358.7,519.8 1364.0,518.8 1374.1,518.8 1380.1,514.7 1384.8,510.7 1390.2,512.9 1394.9,514.9 1400.9,512.6 1405.6,513.8 1411.0,510.7 1415.7,513.8 1421.1,513.8 1427.0,511.5 1432.1,514.7 1437.1,516.1 1441.8,510.9 1447.8,512.9 1457.6,512.9" fill="none" stroke="#555555" stroke-width="1.8" stroke-linejoin="round" stroke-linecap="round"/>
<circle cx="1316.9" cy="520.8" r="2.4" fill="#e8c066"/>
<circle cx="1441.8" cy="510.9" r="2.6" fill="#e5474f"/>
<rect x="1180.2" y="533" width="78.39999999999986" height="35" fill="#d0ecab"/>
<rect x="928" y="533" width="541" height="1" fill="#dcdcdc"/>
<text x="935.9" y="555.7" font-size="14.5" fill="#2a2a2a" textLength="89.2" lengthAdjust="spacingAndGlyphs">Massachusetts</text>
<text x="1105.3" y="555.7" font-size="14.5" fill="#e34c53" textLength="41.9" lengthAdjust="spacingAndGlyphs">-0.34%</text>
<path d="M1158,545 L1173,545 L1165.5,556 Z" fill="#e34c53"/>
<text x="1258.8" y="555.7" font-size="14.5" fill="#2a2a2a" textLength="41.4" lengthAdjust="spacingAndGlyphs">$144M</text>
<polyline points="1316.9,555.9 1332.6,555.9 1337.9,554.7 1343.3,555.9 1348.0,555.9 1353.9,553.9 1358.7,553.9 1364.0,552.9 1374.1,550.9 1380.1,545.8 1384.8,545.8 1390.2,550.9 1394.9,552.9 1400.9,552.9 1405.6,553.9 1415.7,553.9 1421.1,554.8 1427.0,553.9 1432.1,554.8 1437.1,554.8 1441.8,552.7 1447.8,553.9 1452.5,554.8 1457.6,554.8" fill="none" stroke="#555555" stroke-width="1.8" stroke-linejoin="round" stroke-linecap="round"/>
<circle cx="1316.9" cy="555.9" r="2.4" fill="#e8c066"/>
<circle cx="1384.8" cy="545.8" r="2.6" fill="#e5474f"/>
</g>
<rect x="928" y="559" width="541" height="1" fill="#dcdcdc"/>
<text x="1209.3" y="588.5" font-size="14" fill="#606060" font-weight="bold" textLength="90.9" lengthAdjust="spacingAndGlyphs">Sum = $4.05B</text>
<text x="111.4" y="636.0" font-size="15" fill="#8e8e8e" textLength="221.1" lengthAdjust="spacingAndGlyphs">Sales vs Target by Product Category</text>
<text x="228.5" y="670.0" font-size="15" fill="#333333" textLength="75.5" lengthAdjust="spacingAndGlyphs">Accessories</text>
<text x="120.3" y="691.4" font-size="12.5" fill="#7d7d7d" textLength="6.0" lengthAdjust="spacingAndGlyphs">0</text>
<text x="144.4" y="691.4" font-size="12.5" fill="#7d7d7d" textLength="29.0" lengthAdjust="spacingAndGlyphs">500M</text>
<text x="188.1" y="691.4" font-size="12.5" fill="#7d7d7d" textLength="13.0" lengthAdjust="spacingAndGlyphs">1B</text>
<text x="219.7" y="691.4" font-size="12.5" fill="#7d7d7d" textLength="21.0" lengthAdjust="spacingAndGlyphs">1.5B</text>
<text x="259.3" y="691.4" font-size="12.5" fill="#7d7d7d" textLength="13.0" lengthAdjust="spacingAndGlyphs">2B</text>
<text x="290.9" y="691.4" font-size="12.5" fill="#7d7d7d" textLength="21.0" lengthAdjust="spacingAndGlyphs">2.5B</text>
<text x="330.6" y="691.4" font-size="12.5" fill="#7d7d7d" textLength="13.0" lengthAdjust="spacingAndGlyphs">3B</text>
<text x="362.2" y="691.4" font-size="12.5" fill="#7d7d7d" textLength="21.0" lengthAdjust="spacingAndGlyphs">3.5B</text>
<text x="401.8" y="691.4" font-size="12.5" fill="#7d7d7d" textLength="13.0" lengthAdjust="spacingAndGlyphs">4B</text>
<rect x="124.3" y="701" width="33.6" height="5" fill="#7f7f7f"/>
<rect x="159.9" y="701" width="33.6" height="5" fill="#7f7f7f"/>
<rect x="195.6" y="701" width="33.6" height="5" fill="#7f7f7f"/>
<rect x="231.2" y="701" width="33.6" height="5" fill="#7f7f7f"/>
<rect x="266.8" y="701" width="33.6" height="5" fill="#7f7f7f"/>
<rect x="302.4" y="701" width="33.6" height="5" fill="#7f7f7f"/>
<rect x="338.1" y="701" width="33.6" height="5" fill="#7f7f7f"/>
<rect x="373.7" y="701" width="33.6" height="5" fill="#7f7f7f"/>
<rect x="122.7" y="711.3" width="5.3" height="9.5" fill="#c9c3d1"/>
<path d="M122.5,695.5 L133.5,695.5 L128,706.5 Z" fill="#8093a0" stroke="#ffffff" stroke-width="1"/>
<path d="M222.2,738.8 L230.6,727.2 L239.0,738.8 Z" fill="#97b182"/>
<text x="251.6" y="738.5" font-size="17.5" fill="#97b182" textLength="58.0" lengthAdjust="spacingAndGlyphs">+1.01%</text>
<text x="580.1" y="670.0" font-size="15" fill="#333333" textLength="31.8" lengthAdjust="spacingAndGlyphs">Bikes</text>
<text x="450.3" y="691.4" font-size="12.5" fill="#7d7d7d" textLength="6.0" lengthAdjust="spacingAndGlyphs">0</text>
<text x="474.4" y="691.4" font-size="12.5" fill="#7d7d7d" textLength="29.0" lengthAdjust="spacingAndGlyphs">500M</text>
<text x="518.0" y="691.4" font-size="12.5" fill="#7d7d7d" textLength="13.0" lengthAdjust="spacingAndGlyphs">1B</text>
<text x="549.7" y="691.4" font-size="12.5" fill="#7d7d7d" textLength="21.0" lengthAdjust="spacingAndGlyphs">1.5B</text>
<text x="589.3" y="691.4" font-size="12.5" fill="#7d7d7d" textLength="13.0" lengthAdjust="spacingAndGlyphs">2B</text>
<text x="620.9" y="691.4" font-size="12.5" fill="#7d7d7d" textLength="21.0" lengthAdjust="spacingAndGlyphs">2.5B</text>
<text x="660.5" y="691.4" font-size="12.5" fill="#7d7d7d" textLength="13.0" lengthAdjust="spacingAndGlyphs">3B</text>
<text x="692.2" y="691.4" font-size="12.5" fill="#7d7d7d" textLength="21.0" lengthAdjust="spacingAndGlyphs">3.5B</text>
<text x="731.8" y="691.4" font-size="12.5" fill="#7d7d7d" textLength="13.0" lengthAdjust="spacingAndGlyphs">4B</text>
<rect x="454.3" y="701" width="33.6" height="5" fill="#7f7f7f"/>
<rect x="489.9" y="701" width="33.6" height="5" fill="#7f7f7f"/>
<rect x="525.5" y="701" width="33.6" height="5" fill="#7f7f7f"/>
<rect x="561.2" y="701" width="33.6" height="5" fill="#7f7f7f"/>
<rect x="596.8" y="701" width="33.6" height="5" fill="#7f7f7f"/>
<rect x="632.4" y="701" width="33.6" height="5" fill="#7f7f7f"/>
<rect x="668.0" y="701" width="33.6" height="5" fill="#7f7f7f"/>
<rect x="703.7" y="701" width="33.6" height="5" fill="#7f7f7f"/>
<rect x="452.7" y="711.3" width="188.3" height="9.5" fill="#c9c3d1"/>
<path d="M634.8,695.5 L645.8,695.5 L640.3,706.5 Z" fill="#8093a0" stroke="#ffffff" stroke-width="1"/>
<path d="M552.2,738.8 L560.6,727.2 L569.0,738.8 Z" fill="#97b182"/>
<text x="581.8" y="738.5" font-size="17.5" fill="#97b182" textLength="57.6" lengthAdjust="spacingAndGlyphs">+0.44%</text>
<text x="898.5" y="670.0" font-size="15" fill="#333333" textLength="54.8" lengthAdjust="spacingAndGlyphs">Clothing</text>
<text x="780.3" y="691.4" font-size="12.5" fill="#7d7d7d" textLength="6.0" lengthAdjust="spacingAndGlyphs">0</text>
<text x="804.4" y="691.4" font-size="12.5" fill="#7d7d7d" textLength="29.0" lengthAdjust="spacingAndGlyphs">500M</text>
<text x="848.0" y="691.4" font-size="12.5" fill="#7d7d7d" textLength="13.0" lengthAdjust="spacingAndGlyphs">1B</text>
<text x="879.7" y="691.4" font-size="12.5" fill="#7d7d7d" textLength="21.0" lengthAdjust="spacingAndGlyphs">1.5B</text>
<text x="919.3" y="691.4" font-size="12.5" fill="#7d7d7d" textLength="13.0" lengthAdjust="spacingAndGlyphs">2B</text>
<text x="950.9" y="691.4" font-size="12.5" fill="#7d7d7d" textLength="21.0" lengthAdjust="spacingAndGlyphs">2.5B</text>
<text x="990.5" y="691.4" font-size="12.5" fill="#7d7d7d" textLength="13.0" lengthAdjust="spacingAndGlyphs">3B</text>
<text x="1022.2" y="691.4" font-size="12.5" fill="#7d7d7d" textLength="21.0" lengthAdjust="spacingAndGlyphs">3.5B</text>
<text x="1061.8" y="691.4" font-size="12.5" fill="#7d7d7d" textLength="13.0" lengthAdjust="spacingAndGlyphs">4B</text>
<rect x="784.3" y="701" width="33.6" height="5" fill="#7f7f7f"/>
<rect x="819.9" y="701" width="33.6" height="5" fill="#7f7f7f"/>
<rect x="855.5" y="701" width="33.6" height="5" fill="#7f7f7f"/>
<rect x="891.2" y="701" width="33.6" height="5" fill="#7f7f7f"/>
<rect x="926.8" y="701" width="33.6" height="5" fill="#7f7f7f"/>
<rect x="962.4" y="701" width="33.6" height="5" fill="#7f7f7f"/>
<rect x="998.0" y="701" width="33.6" height="5" fill="#7f7f7f"/>
<rect x="1033.7" y="701" width="33.6" height="5" fill="#7f7f7f"/>
<rect x="782.7" y="711.3" width="3.3" height="9.5" fill="#c9c3d1"/>
<path d="M780.5,695.5 L791.5,695.5 L786,706.5 Z" fill="#8093a0" stroke="#ffffff" stroke-width="1"/>
<path d="M881.9,738.8 L890.3,727.2 L898.6999999999999,738.8 Z" fill="#97b182"/>
<text x="911.8" y="738.5" font-size="17.5" fill="#97b182" textLength="57.7" lengthAdjust="spacingAndGlyphs">+1.47%</text>
<text x="1213.1" y="670.0" font-size="15" fill="#333333" textLength="85.4" lengthAdjust="spacingAndGlyphs">Components</text>
<text x="1110.3" y="691.4" font-size="12.5" fill="#7d7d7d" textLength="6.0" lengthAdjust="spacingAndGlyphs">0</text>
<text x="1134.4" y="691.4" font-size="12.5" fill="#7d7d7d" textLength="29.0" lengthAdjust="spacingAndGlyphs">500M</text>
<text x="1178.0" y="691.4" font-size="12.5" fill="#7d7d7d" textLength="13.0" lengthAdjust="spacingAndGlyphs">1B</text>
<text x="1209.7" y="691.4" font-size="12.5" fill="#7d7d7d" textLength="21.0" lengthAdjust="spacingAndGlyphs">1.5B</text>
<text x="1249.3" y="691.4" font-size="12.5" fill="#7d7d7d" textLength="13.0" lengthAdjust="spacingAndGlyphs">2B</text>
<text x="1280.9" y="691.4" font-size="12.5" fill="#7d7d7d" textLength="21.0" lengthAdjust="spacingAndGlyphs">2.5B</text>
<text x="1320.5" y="691.4" font-size="12.5" fill="#7d7d7d" textLength="13.0" lengthAdjust="spacingAndGlyphs">3B</text>
<text x="1352.2" y="691.4" font-size="12.5" fill="#7d7d7d" textLength="21.0" lengthAdjust="spacingAndGlyphs">3.5B</text>
<text x="1391.8" y="691.4" font-size="12.5" fill="#7d7d7d" textLength="13.0" lengthAdjust="spacingAndGlyphs">4B</text>
<rect x="1114.3" y="701" width="33.6" height="5" fill="#7f7f7f"/>
<rect x="1149.9" y="701" width="33.6" height="5" fill="#7f7f7f"/>
<rect x="1185.5" y="701" width="33.6" height="5" fill="#7f7f7f"/>
<rect x="1221.2" y="701" width="33.6" height="5" fill="#7f7f7f"/>
<rect x="1256.8" y="701" width="33.6" height="5" fill="#7f7f7f"/>
<rect x="1292.4" y="701" width="33.6" height="5" fill="#7f7f7f"/>
<rect x="1328.0" y="701" width="33.6" height="5" fill="#7f7f7f"/>
<rect x="1363.7" y="701" width="33.6" height="5" fill="#7f7f7f"/>
<rect x="1112.7" y="711.3" width="93.3" height="9.5" fill="#c9c3d1"/>
<path d="M1199.0,695.5 L1210.0,695.5 L1204.5,706.5 Z" fill="#8093a0" stroke="#ffffff" stroke-width="1"/>
<path d="M1211.8,738.8 L1220.2,727.2 L1228.6,738.8 Z" fill="#97b182"/>
<text x="1241.6" y="738.5" font-size="17.5" fill="#97b182" textLength="58.2" lengthAdjust="spacingAndGlyphs">+1.60%</text>
<rect x="180.7" y="791" width="1" height="34.5" fill="#cdcdcd"/>
<rect x="225.3" y="791" width="1" height="34.5" fill="#cdcdcd"/>
<rect x="273.1" y="791" width="1" height="34.5" fill="#cdcdcd"/>
<rect x="319.3" y="791" width="1" height="34.5" fill="#cdcdcd"/>
<rect x="367.1" y="791" width="1" height="34.5" fill="#cdcdcd"/>
<rect x="413.3" y="791" width="1" height="34.5" fill="#cdcdcd"/>
<rect x="461.1" y="791" width="1" height="34.5" fill="#cdcdcd"/>
<rect x="508.8" y="791" width="1" height="34.5" fill="#cdcdcd"/>
<rect x="555.0" y="791" width="1" height="34.5" fill="#cdcdcd"/>
<rect x="602.8" y="791" width="1" height="34.5" fill="#cdcdcd"/>
<rect x="649.0" y="791" width="1" height="34.5" fill="#cdcdcd"/>
<rect x="696.8" y="791" width="1" height="34.5" fill="#cdcdcd"/>
<rect x="744.5" y="791" width="1" height="34.5" fill="#cdcdcd"/>
<rect x="787.7" y="791" width="1" height="34.5" fill="#cdcdcd"/>
<rect x="835.4" y="791" width="1" height="34.5" fill="#cdcdcd"/>
<rect x="881.7" y="791" width="1" height="34.5" fill="#cdcdcd"/>
<rect x="929.4" y="791" width="1" height="34.5" fill="#cdcdcd"/>
<rect x="975.6" y="791" width="1" height="34.5" fill="#cdcdcd"/>
<rect x="1023.4" y="791" width="1" height="34.5" fill="#cdcdcd"/>
<rect x="1071.2" y="791" width="1" height="34.5" fill="#cdcdcd"/>
<rect x="1117.4" y="791" width="1" height="34.5" fill="#cdcdcd"/>
<rect x="1165.1" y="791" width="1" height="34.5" fill="#cdcdcd"/>
<rect x="1211.4" y="791" width="1" height="34.5" fill="#cdcdcd"/>
<rect x="1259.1" y="791" width="1" height="34.5" fill="#cdcdcd"/>
<rect x="1306.9" y="791" width="1" height="34.5" fill="#cdcdcd"/>
<rect x="1350.0" y="791" width="1" height="34.5" fill="#cdcdcd"/>
<rect x="1397.8" y="791" width="1" height="34.5" fill="#cdcdcd"/>
<polyline points="156.5,819.8 204.3,815.7 248.9,817.1 296.7,815.7 342.9,811.7 390.7,814.1 436.9,812.8 484.7,807.7 532.4,811.3 578.7,805.8 626.4,809.0 672.6,808.0 720.4,798.7 768.2,802.6 811.3,802.6 859.0,803.5 905.3,798.7 953.0,803.5 999.2,797.7 1047.0,802.6 1094.8,801.6 1141.0,793.9 1188.8,800.1 1235.0,800.1 1282.7,793.9 1330.5,800.1 1373.6,800.1 1421.4,801.0" fill="none" stroke="#955a6c" stroke-width="2" stroke-linejoin="round" stroke-linecap="round"/>
<polyline points="156.5,822.2 204.3,820.4 248.9,820.4 296.7,820.1 342.9,817.4 390.7,818.2 436.9,818.2 484.7,814.7 532.4,816.1 578.7,812.8 626.4,815.4 672.6,814.4 720.4,811.2 768.2,811.9 811.3,811.2 859.0,811.2 905.3,808.6 953.0,811.9 999.2,808.2 1047.0,811.5 1094.8,809.9 1141.0,804.4 1188.8,808.4 1235.0,807.5 1282.7,804.6 1330.5,807.8 1373.6,807.8 1421.4,808.4" fill="none" stroke="#bd4a51" stroke-width="2" stroke-linejoin="round" stroke-linecap="round"/>
<polyline points="156.5,821.6 204.3,819.8 248.9,819.8 296.7,819.5 342.9,816.8 390.7,817.6 436.9,817.6 484.7,814.1 532.4,815.5 578.7,812.2 626.4,814.8 672.6,813.8 720.4,810.0 768.2,811.3 811.3,810.6 859.0,810.6 905.3,808.0 953.0,811.3 999.2,807.6 1047.0,810.9 1094.8,809.3 1141.0,803.8 1188.8,807.8 1235.0,806.9 1282.7,802.6 1330.5,807.2 1373.6,807.2 1421.4,807.8" fill="none" stroke="#ab8550" stroke-width="2" stroke-linejoin="round" stroke-linecap="round"/>
<rect x="157" y="824.5" width="1264" height="1.4" fill="#5a8991"/>
<rect x="133" y="786" width="1" height="40" fill="#6a6a6a"/>
<rect x="1444" y="786" width="1" height="40" fill="#6a6a6a"/>
<rect x="133" y="768.2" width="71.6" height="18.5" fill="#666666"/>
<path d="M133,786.5 V791.5 L138.5,786.5 Z" fill="#666666"/>
<text x="137.2" y="781.8" font-size="12" fill="#ffffff" textLength="62.5" lengthAdjust="spacingAndGlyphs">January 2016</text>
<rect x="1387.1" y="768.1" width="57.7" height="18.4" fill="#666666"/>
<path d="M1444.8,786.4 V791.5 L1439.3,786.4 Z" fill="#666666"/>
<text x="1391.3" y="781.8" font-size="12" fill="#ffffff" textLength="48.6" lengthAdjust="spacingAndGlyphs">April 2018</text>
<text x="124.9" y="843.8" font-size="12" fill="#767676" textLength="63.3" lengthAdjust="spacingAndGlyphs">January 2016</text>
<text x="220.6" y="843.8" font-size="12" fill="#767676" textLength="56.6" lengthAdjust="spacingAndGlyphs">March 2016</text>
<text x="319.4" y="843.8" font-size="12" fill="#767676" textLength="47.1" lengthAdjust="spacingAndGlyphs">May 2016</text>
<text x="414.7" y="843.8" font-size="12" fill="#767676" textLength="44.4" lengthAdjust="spacingAndGlyphs">July 2016</text>
<text x="492.4" y="843.8" font-size="12" fill="#767676" textLength="80.0" lengthAdjust="spacingAndGlyphs">September 2016</text>
<text x="587.8" y="843.8" font-size="12" fill="#767676" textLength="77.2" lengthAdjust="spacingAndGlyphs">November 2016</text>
<text x="688.7" y="843.8" font-size="12" fill="#767676" textLength="63.3" lengthAdjust="spacingAndGlyphs">January 2017</text>
<text x="783.0" y="843.8" font-size="12" fill="#767676" textLength="56.6" lengthAdjust="spacingAndGlyphs">March 2017</text>
<text x="881.7" y="843.8" font-size="12" fill="#767676" textLength="47.1" lengthAdjust="spacingAndGlyphs">May 2017</text>
<text x="977.0" y="843.8" font-size="12" fill="#767676" textLength="44.4" lengthAdjust="spacingAndGlyphs">July 2017</text>
<text x="1054.8" y="843.8" font-size="12" fill="#767676" textLength="80.0" lengthAdjust="spacingAndGlyphs">September 2017</text>
<text x="1150.2" y="843.8" font-size="12" fill="#767676" textLength="77.2" lengthAdjust="spacingAndGlyphs">November 2017</text>
<text x="1251.0" y="843.8" font-size="12" fill="#767676" textLength="63.4" lengthAdjust="spacingAndGlyphs">January 2018</text>
<text x="1345.2" y="843.8" font-size="12" fill="#767676" textLength="56.9" lengthAdjust="spacingAndGlyphs">March 2018</text>
</svg></body></html>
